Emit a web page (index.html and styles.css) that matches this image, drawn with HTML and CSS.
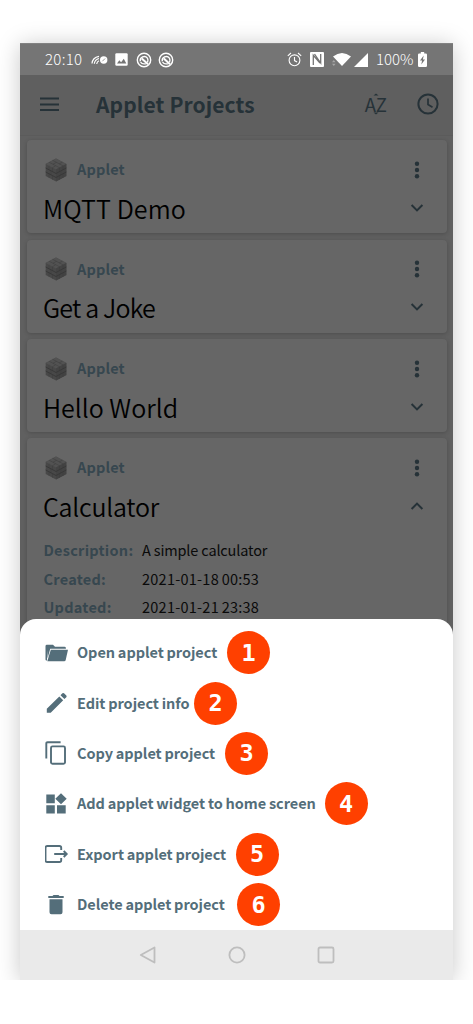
FILE: index.html
```
<!DOCTYPE html>
<html lang="en">
<head>
<meta charset="utf-8">
<title>Applet Projects</title>
<link rel="stylesheet" href="styles.css">
</head>
<body>
<svg class="defs" width="0" height="0">
  <symbol id="cube" viewBox="0 0 22 24">
    <path fill="#484848" d="M11 .5 21.300 6v12L11 23.500.7 18V6z"/>
    <path fill="#525252" d="M11 .5 21.300 6 11 11.500.7 6z"/>
    <path fill="#434343" d="M11 11.500 21.300 6v12L11 23.500z"/>
    <path fill="none" stroke="#383838" stroke-width=".9" d="M.7 10 11 15.500 21.300 10M.7 14 11 19.500 21.300 14"/>
    <path fill="none" stroke="#3c3c3c" stroke-width=".5" d="M4 7.800v4M7.500 9.700v4M6 12.800v4M4 15.800v4M7.500 17.700v4M14.500 9.700v4M18 7.800v4M16 12.800v4M14.500 17.700v4M18 15.800v4M4.100 4.200l10.300 5.500M7.600 2.300l10.300 5.500M7.500 9.600l3-1.600M8 6.200l3.500-1.900M14 6l3.500-1.900"/>
  </symbol>
  <symbol id="dots" viewBox="0 0 6 18"><circle cx="3" cy="2.800" r="2.200"/><circle cx="3" cy="9" r="2.200"/><circle cx="3" cy="15.200" r="2.200"/></symbol>
  <symbol id="down" viewBox="0 0 14 10"><path d="M1.600 2 7 7.400 12.400 2" fill="none" stroke="#263238" stroke-width="2"/></symbol>
  <symbol id="sync" viewBox="0 0 16 16">
    <circle cx="8" cy="8" r="6.700" fill="none" stroke="#fff" stroke-width="1.400"/>
    <path fill="none" stroke="#fff" stroke-width="1.400" d="M4.300 9.300A4 4 0 0 1 11.400 6.100Q12.600 8.300 11.500 10.300M9.800 11.700Q6 12.500 4.600 10"/>
    <path stroke="#fff" stroke-width="2" d="M5.800 6.600 12 12.300"/>
  </symbol>
</svg>
<main class="phone">
  <div class="status">
    <span class="time">20:10</span>
    <svg class="cast" width="17" height="10" viewBox="0 0 17 10"><path d="M1 8.500Q1.500 2.500 8 1.300M3.300 8.800Q3.800 4.500 8 3.500M5.700 9Q6 6.500 8 5.700" fill="none" stroke="#fff" stroke-width="1.200"/><circle cx="12.700" cy="5" r="3.700" fill="#fff"/><path d="m11.300 6.300 2.800-2.800" stroke="#999"/></svg>
    <svg class="photo" width="13" height="13" viewBox="0 0 13 13"><rect x=".3" y=".3" width="12.400" height="12.400" rx="1.200" fill="#fff"/><path d="M2 10.500 4.300 7.200l1.800 2 2.700-3.500 2.500 4.800z" fill="#757575"/></svg>
    <svg class="sync" width="16" height="16"><use href="#sync"/></svg>
    <svg class="sync2" width="16" height="16"><use href="#sync"/></svg>
    <span class="grow"></span>
    <svg class="alarm" width="15" height="15" viewBox="0 0 15 15" fill="none" stroke="#fff" stroke-width="1.100"><circle cx="7.500" cy="8.300" r="5.400"/><path d="M.8 3.800 4 1M14.200 3.800 11 1M7.500 5v3.600l2.600 1.500"/></svg>
    <svg class="nfc" width="14" height="15" viewBox="0 0 14 15"><rect width="14" height="15" rx="1" fill="#fff"/><path d="M3.300 13V3.300L10 11M4.500 2l6.200 9V2" fill="none" stroke="#757575" stroke-width="1.300"/></svg>
    <svg class="wifi" width="20" height="15" viewBox="0 0 20 15"><path d="M1 4.500Q10-2.700 19 4.500L10 14z" fill="#fff"/><path d="M0 10.300 1.800 8l1.800 2.300zM0 11.800 1.800 14l1.800-2.200z" fill="#a5a5a5"/></svg>
    <svg class="signal" width="14" height="14" viewBox="0 0 14 14"><path d="M0 14 14 0v14z" fill="#fff"/></svg>
    <span class="percent">100%</span>
    <svg class="battery" width="9" height="15" viewBox="0 0 9 15"><path d="M2.800 0h3.400v1.500h1.600Q9 1.500 9 2.700v11Q9 15 7.800 15H1.200Q0 15 0 13.700v-11Q0 1.500 1.200 1.500h1.600z" fill="#fff"/><path d="M5.700 3.500 2 8.500h2.100l-.8 4 3.700-5H4.900z" fill="#757575"/></svg>
  </div>
  <header class="bar">
    <svg width="20" height="14" viewBox="0 0 20 14"><path d="M0 1.500h19M0 7.500h19M0 13h19" stroke="#263238" stroke-width="1.800"/></svg>
    <h1>Applet Projects</h1>
    <span class="grow"></span>
    <div class="sort"><svg width="6" height="3" viewBox="0 0 6 3"><path d="m.5 2.500 2.500-2 2.500 2z"/></svg><span>AZ</span><svg width="6" height="3" viewBox="0 0 6 3"><path d="m.5.5 2.500 2 2.500-2z"/></svg></div>
    <svg class="clock" width="22" height="22" viewBox="0 0 22 22" fill="none" stroke="#263238" stroke-width="2"><circle cx="11" cy="11" r="9.600"/><path d="M11 5.500v6l4.500 2.700" stroke-width="1.700"/></svg>
  </header>
  <section class="list">
    <article class="card">
      <div class="head"><svg class="cube" width="22" height="24"><use href="#cube"/></svg><span>Applet</span><svg class="dots" width="6" height="18"><use href="#dots"/></svg></div>
      <div class="title"><h2 class="t1">MQTT Demo</h2><svg width="14" height="10"><use href="#down"/></svg></div>
    </article>
    <article class="card">
      <div class="head"><svg class="cube" width="22" height="24"><use href="#cube"/></svg><span>Applet</span><svg class="dots" width="6" height="18"><use href="#dots"/></svg></div>
      <div class="title"><h2 class="t2">Get a Joke</h2><svg width="14" height="10"><use href="#down"/></svg></div>
    </article>
    <article class="card">
      <div class="head"><svg class="cube" width="22" height="24"><use href="#cube"/></svg><span>Applet</span><svg class="dots" width="6" height="18"><use href="#dots"/></svg></div>
      <div class="title"><h2 class="t3">Hello World</h2><svg width="14" height="10"><use href="#down"/></svg></div>
    </article>
    <article class="card open">
      <div class="head"><svg class="cube" width="22" height="24"><use href="#cube"/></svg><span>Applet</span><svg class="dots" width="6" height="18"><use href="#dots"/></svg></div>
      <div class="title"><h2 class="t4">Calculator</h2><svg class="up" width="14" height="10"><use href="#down"/></svg></div>
      <dl>
        <dt>Description:</dt><dd class="desc">A simple calculator</dd>
        <dt>Created:</dt><dd>2021-01-18 00:53</dd>
        <dt>Updated:</dt><dd>2021-01-21 23:38</dd>
      </dl>
    </article>
  </section>
  <ul class="sheet">
    <li><svg width="24" height="24" viewBox="0 0 24 24"><path d="M.5 5.200Q.5 3.800 1.900 3.800H8l2 2h9.500q1.400 0 1.400 1.400v.6H5.200L2.600 17.500 2 9v10.500H1.500q-1 0-1-1z"/><path d="M5.800 8.800H23L20.700 19q-.3 1.300-1.500 1.300H2.300z"/></svg><span class="label l1">Open applet project</span><b class="badge">1</b></li>
    <li><svg width="24" height="24" viewBox="0 0 24 24"><path d="M1.800 21.800v-4L14.300 5.400l3.900 3.900L5.700 21.800zM15.500 4.200 17.400 2.300q.8-.7 1.600 0l2.300 2.300q.8.800 0 1.600l-1.900 1.900z"/></svg><span class="label l2">Edit project info</span><b class="badge">2</b></li>
    <li><svg width="24" height="24" viewBox="0 0 24 24" fill="none" stroke="#546e7a" stroke-width="1.900"><path d="M1.300 17.500V2.500q0-1.300 1.300-1.300h13"/><rect x="6" y="5.400" width="14" height="17.400" rx="1.500"/></svg><span class="label l3">Copy applet project</span><b class="badge">3</b></li>
    <li><svg width="24" height="24" viewBox="0 0 24 24"><path d="M1.300 2.500h8.500V11.300H1.300zM1.300 13.300h8.500v8.300H1.300zM12 13.300h8.700v8.300H12zM16 1.300l5.700 5.500-5.700 5.500-5.700-5.500z"/></svg><span class="label l4">Add applet widget to home screen</span><b class="badge">4</b></li>
    <li><svg width="24" height="24" viewBox="0 0 24 24" fill="none" stroke="#546e7a" stroke-width="1.900"><path d="M16 8V5.800q0-1.800-1.800-1.800H2.100q-1.800 0-1.800 1.800v12.400q0 1.800 1.800 1.800h12.100q1.800 0 1.800-1.800V16M9 12H21M18.500 9 21.500 12l-3 3" transform="translate(.2 0)"/></svg><span class="label l5">Export applet project</span><b class="badge">5</b></li>
    <li><svg width="24" height="24" viewBox="0 0 24 24"><path d="M3.300 3h4.200l1-1h5l1 1h4.200v2H3.300zM4.500 6.200h13v13q0 2-2 2h-9q-2 0-2-2z"/></svg><span class="label l6">Delete applet project</span><b class="badge">6</b></li>
  </ul>
  <nav class="nav">
    <svg width="18" height="18" viewBox="0 0 18 18"><path d="M1.800 9 15.500 1.500v15z"/></svg>
    <svg width="18" height="18" viewBox="0 0 18 18"><circle cx="9" cy="9" r="7.600"/></svg>
    <svg width="18" height="18" viewBox="0 0 18 18"><rect x="1.500" y="1.500" width="15" height="15" rx="1.500"/></svg>
  </nav>
</main>
</body>
</html>
```
FILE: styles.css
```
* { box-sizing: border-box; margin: 0; padding: 0; }
body { background: #fff; font-family: "Noto Sans CJK SC", "Noto Sans", sans-serif; overflow: hidden; }
.defs { display: block; }
svg { display: block; flex: none; }
.grow { flex: 1; }
.phone { width: 433px; height: 937px; margin: 43px 0 0 20px; background: #606060; display: flex; flex-direction: column; box-shadow: 0 2px 22px rgba(0,0,0,.22); }
.status { height: 32px; flex: none; background: #757575; color: #fff; display: flex; align-items: center; padding: 0 26px 0 25px; font-size: 15px; font-weight: 300; border-top: 1px solid #828282; white-space: nowrap; }
.time, .percent { line-height: 22px; padding-bottom: 1px; }
.time { width: 46px; letter-spacing: .3px; }
.photo { margin-left: 7px; }
.sync { margin-left: 8px; }
.sync2 { margin-left: 6px; }
.nfc { margin-left: 8px; }
.wifi { margin-left: 8px; }
.signal { margin-left: 2px; }
.percent { width: 42px; margin-left: 8px; }
.bar { height: 61px; flex: none; background: #5f5f5f; border-bottom: 1px solid #5b5b5b; display: flex; align-items: center; padding: 0 14px 2px 20px; color: #263238; }
.bar h1 { font-size: 21px; line-height: 30px; font-weight: 700; margin-left: 36px; letter-spacing: .1px; white-space: nowrap; }
.sort { display: flex; flex-direction: column; align-items: center; font-size: 18.500px; line-height: 16px; fill: #263238; margin-right: 30px; }
.list { flex: none; height: 499px; padding: 4.400px 6.500px 0; overflow: hidden; display: flex; flex-direction: column; gap: 6.300px; }
.card { flex: none; height: 93px; border-radius: 4px; background: #666; box-shadow: 0 1px 4px rgba(0,0,0,.2); padding: 17.600px 26.500px 0 18px; }
.open { height: 240px; }
.head { height: 24px; display: flex; align-items: center; color: #37474f; font-size: 14.500px; line-height: 22px; font-weight: 700; }
.head span { flex: 1; margin-left: 10.500px; letter-spacing: .15px; padding-bottom: 1px; }
.dots { fill: #263238; }
.title { height: 34px; margin-top: 9px; display: flex; align-items: center; justify-content: space-between; margin-left: -1.500px; margin-right: -4px; }
.title h2 { font-size: 25px; line-height: 34px; font-weight: 350; color: #000; white-space: nowrap; }
.t1 { letter-spacing: .1px; }
.t2 { letter-spacing: -.8px; }
.t4 { letter-spacing: -.25px; }
.up { transform: rotate(180deg); }
dl { display: grid; grid-template-columns: 98.500px 1fr; grid-auto-rows: 28.800px; margin: 13px 0 0 -1px; line-height: 28.800px; font-size: 14.500px; white-space: nowrap; }
dt { font-weight: 700; color: #37474f; letter-spacing: .25px; }
dd { color: #0a0a0a; letter-spacing: .25px; word-spacing: -.8px; }
.desc { letter-spacing: -.15px; word-spacing: 0; }
.sheet { list-style: none; height: 311px; margin-top: -16px; flex: none; border-radius: 16px 16px 0 0; background: #fff; padding-top: 8.500px; position: relative; }
.sheet li { height: 50.400px; padding-left: 25px; display: flex; align-items: center; color: #546e7a; fill: #546e7a; }
.label { font-size: 14.500px; line-height: 22px; padding-bottom: 1px; font-weight: 700; margin-left: 8px; white-space: nowrap; letter-spacing: -.05px; word-spacing: -.4px; }
.l1 { width: 150px; }
.l2 { width: 117px; }
.l3 { width: 148px; }
.l4 { width: 247.500px; }
.l5 { width: 158.500px; }
.l6 { width: 160px; }
.badge { width: 43px; height: 43px; border-radius: 50%; background: #ff4000; color: #fff; display: flex; align-items: center; justify-content: center; font: 700 23.500px "DejaVu Sans Mono", monospace; }
.nav { flex: 1; background: #eaeaea; display: flex; align-items: center; justify-content: center; gap: 71px; fill: none; stroke: #bebebe; stroke-width: 1.800; stroke-linejoin: round; }
```
